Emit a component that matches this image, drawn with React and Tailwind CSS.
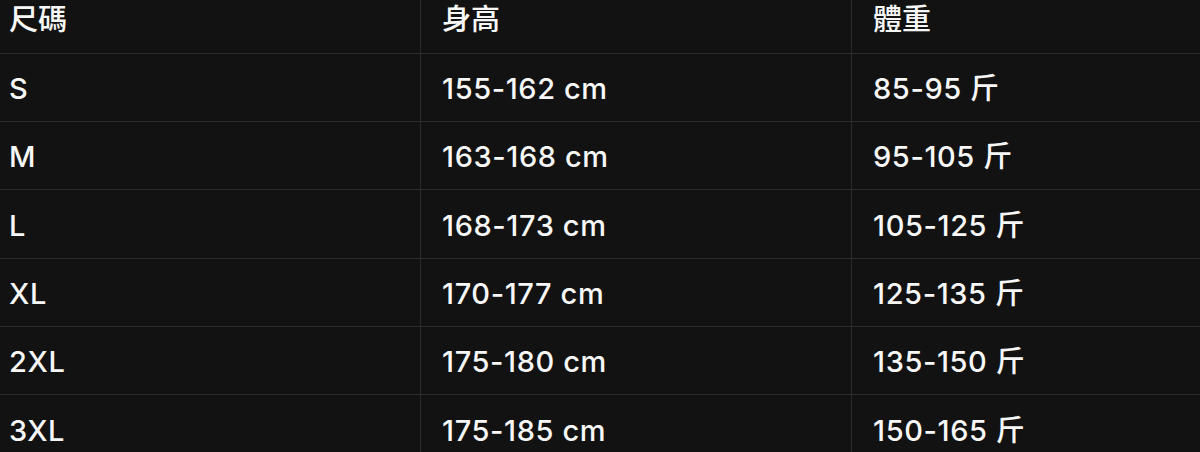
import React from "react";

const rows = [
  ["S", "155-162 cm", "85-95 斤"],
  ["M", "163-168 cm", "95-105 斤"],
  ["L", "168-173 cm", "105-125 斤"],
  ["XL", "170-177 cm", "125-135 斤"],
  ["2XL", "175-180 cm", "135-150 斤"],
  ["3XL", "175-185 cm", "150-165 斤"],
];

export default function App() {
  const font = {
    fontFamily: 'Inter, "Noto Sans CJK TC", sans-serif',
  };
  return (
    <div
      className="w-[1200px] h-[452px] overflow-hidden bg-[#121212] text-[#f7f7f7] text-[29px] tracking-[0.6px] font-medium"
      style={font}
    >
      <div className="grid grid-cols-[421px_431px_1fr]">
        {["尺碼", "身高", "體重"].map((h, i) => (
          <div
            key={h}
            className={`h-[54px] flex items-center pb-[14px] border-b border-[#2c2c2c] tracking-normal ${
              i === 0 ? "pl-[9px] border-r" : i === 1 ? "pl-[21px] border-r" : "pl-[21px]"
            }`}
          >
            {h}
          </div>
        ))}
        {rows.map((r, ri) =>
          r.map((c, i) => (
            <div
              key={r[0] + i}
              className={`${ri === 2 || ri === 5 ? "h-[69px]" : "h-[68px]"} flex items-center pt-[3px] border-b border-[#2c2c2c] ${
                i === 0 ? "pl-[9px] border-r" : i === 1 ? "pl-[21px] border-r" : "pl-[21px]"
              }`}
            >
              {c}
            </div>
          ))
        )}
      </div>
    </div>
  );
}
